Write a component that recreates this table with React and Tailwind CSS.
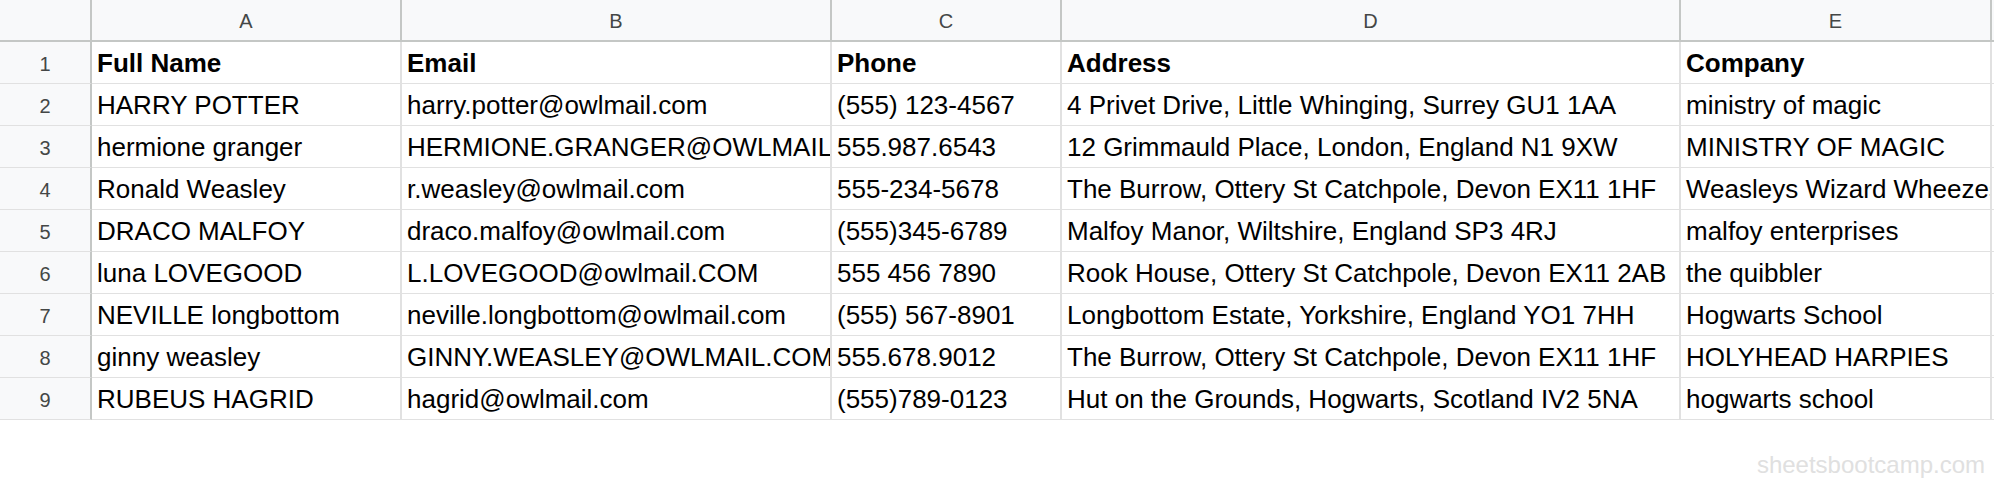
import React from 'react';

const columns = ['A', 'B', 'C', 'D', 'E'];

const rows = [
  ['Full Name', 'Email', 'Phone', 'Address', 'Company'],
  ['HARRY POTTER', 'harry.potter@owlmail.com', '(555) 123-4567', '4 Privet Drive, Little Whinging, Surrey GU1 1AA', 'ministry of magic'],
  ['hermione granger', 'HERMIONE.GRANGER@OWLMAIL.COM', '555.987.6543', '12 Grimmauld Place, London, England N1 9XW', 'MINISTRY OF MAGIC'],
  ['Ronald Weasley', 'r.weasley@owlmail.com', '555-234-5678', 'The Burrow, Ottery St Catchpole, Devon EX11 1HF', 'Weasleys Wizard Wheezes'],
  ['DRACO MALFOY', 'draco.malfoy@owlmail.com', '(555)345-6789', 'Malfoy Manor, Wiltshire, England SP3 4RJ', 'malfoy enterprises'],
  ['luna LOVEGOOD', 'L.LOVEGOOD@owlmail.COM', '555 456 7890', 'Rook House, Ottery St Catchpole, Devon EX11 2AB', 'the quibbler'],
  ['NEVILLE longbottom', 'neville.longbottom@owlmail.com', '(555) 567-8901', 'Longbottom Estate, Yorkshire, England YO1 7HH', 'Hogwarts School'],
  ['ginny weasley', 'GINNY.WEASLEY@OWLMAIL.COM', '555.678.9012', 'The Burrow, Ottery St Catchpole, Devon EX11 1HF', 'HOLYHEAD HARPIES'],
  ['RUBEUS HAGRID', 'hagrid@owlmail.com', '(555)789-0123', 'Hut on the Grounds, Hogwarts, Scotland IV2 5NA', 'hogwarts school']
];

const gridCols = 'grid grid-cols-[92px_310px_430px_230px_619px_311px_2px]';

const App = () => {
  return (
    <div className="w-[1994px] h-[484px] bg-white overflow-hidden font-['Liberation_Sans',Arial,sans-serif]">
      {/* column letters */}
      <div className={`${gridCols} h-[42px] bg-[#f8f9fa] border-b-2 border-[#c4c7c5]`}>
        <div className="border-r-2 border-[#c4c7c5]" />
        {columns.map((letter) => (
          <div
            key={letter}
            className="flex items-center justify-center border-r-2 border-[#c4c7c5] text-[20px] text-[#444746] pt-[2px]"
          >
            {letter}
          </div>
        ))}
        <div />
      </div>

      {rows.map((row, i) => (
        <div key={i} className={`${gridCols} h-[42px]`}>
          <div className="flex items-center justify-center bg-[#f8f9fa] border-r-2 border-r-[#c4c7c5] border-b border-b-[#e1e1e1] text-[20px] text-[#444746] pt-[2px]">
            {i + 1}
          </div>
          {row.map((cell, j) => (
            <div
              key={j}
              className={`flex items-center overflow-hidden whitespace-nowrap pl-[5px] pt-[2px] border-r-2 border-b border-[#e1e1e1] text-[26px] text-black ${
                i === 0 ? 'font-bold' : ''
              }`}
            >
              {cell}
            </div>
          ))}
          <div className="border-b border-[#e1e1e1]" />
        </div>
      ))}

      <div className="flex justify-end pr-[9px] mt-[31px]">
        <span className="text-[24px] leading-[28px] text-[#e0e0e0]">sheetsbootcamp.com</span>
      </div>
    </div>
  );
};

export default App;
